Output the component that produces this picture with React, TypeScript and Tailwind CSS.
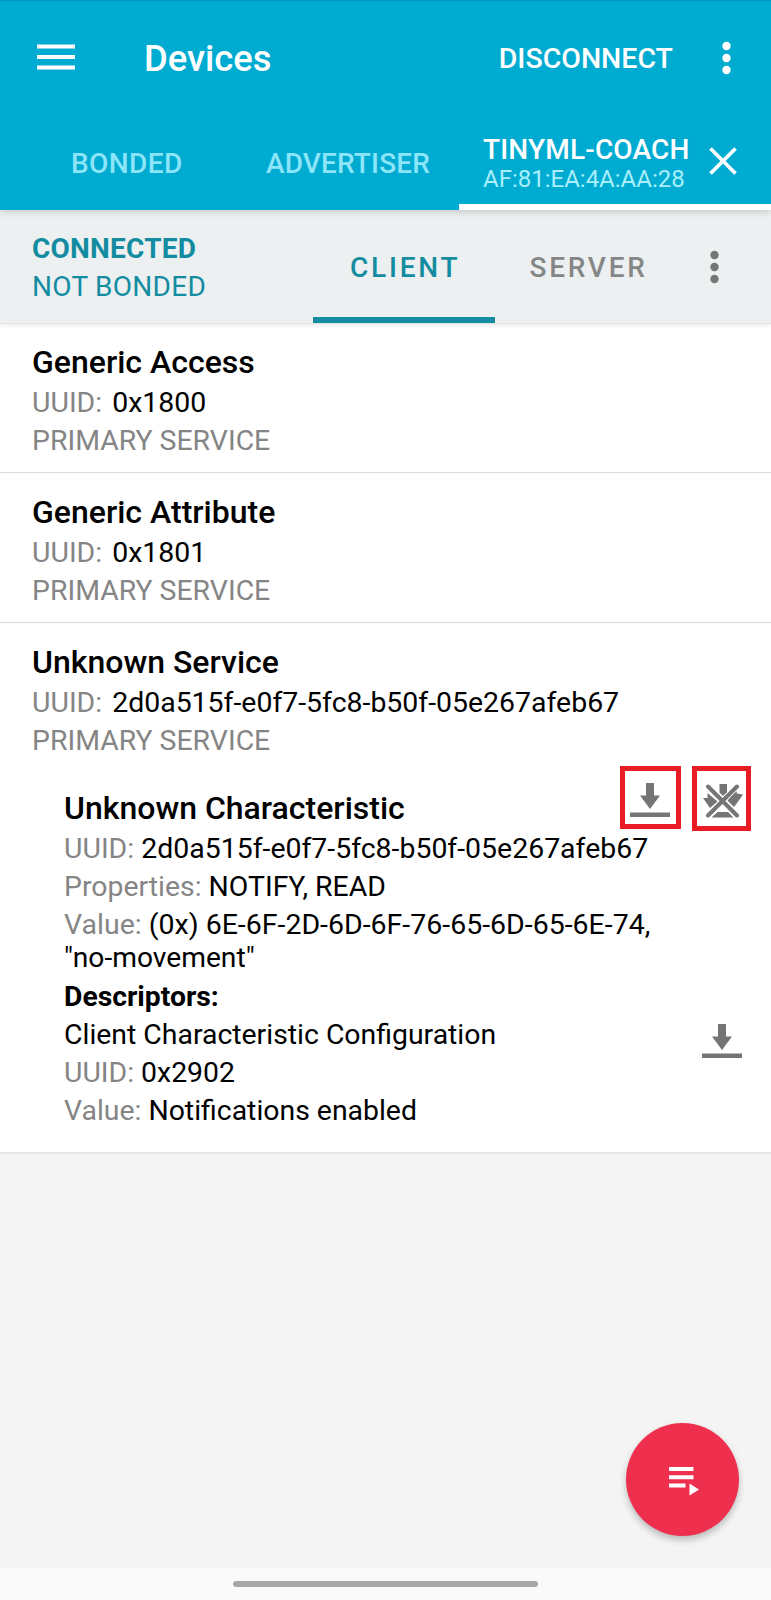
import React from "react";

function DownloadIcon() {
  return (
    <svg className="block h-[35px] w-10" viewBox="0 0 40 35" fill="#757575">
      <path d="M16 0h8v12.500h6L20 26 10 12.500h6z" />
      <path d="M0 29.500h40V34H0z" />
    </svg>
  );
}

function UnsubscribeIcon() {
  return (
    <svg className="block h-[34px] w-10" viewBox="0 0 40 34">
      <g fill="#757575">
        <path d="M16.500 0h7.500v8.500L20.200 12l-3.700-3.500z" />
        <path d="M0 14h4.500V9l10 8.500L7 24z" />
        <path d="M40 10.500l-6-1L33 6l-8.500 10.500L31 23l4.500-6z" />
        <path d="M8.500 33.500l6-5.500h10.500l5.500 5.500z" />
      </g>
      <path d="M5 2.500l29 29M34 2.500l-29 29" fill="none" stroke="#ffffff" strokeWidth="6" />
      <path d="M5 2.500l29 29M34 2.500l-29 29" fill="none" stroke="#757575" strokeWidth="4" strokeLinecap="round" />
    </svg>
  );
}

function MoreIcon() {
  return (
    <svg className="block h-[34px] w-[9px]" viewBox="0 0 9 34" fill="currentColor">
      <circle cx="4.500" cy="5" r="4.200" />
      <circle cx="4.500" cy="17" r="4.200" />
      <circle cx="4.500" cy="29" r="4.200" />
    </svg>
  );
}

function Label({ children }: { children: React.ReactNode }) {
  return <span className="text-[#858585]">{children}</span>;
}

function Service({ name, uuid }: { name: string; uuid: string }) {
  return (
    <>
      <h2 className="mb-0.5 text-[32px] leading-10 font-medium">{name}</h2>
      <div className="flex gap-2.5 text-[28.450px] leading-[38px]">
        <Label>UUID:</Label>
        <span>{uuid}</span>
      </div>
      <div className="text-[28.400px] leading-[38px]">
        <Label>PRIMARY SERVICE</Label>
      </div>
    </>
  );
}

export default function App() {
  return (
    <div className="flex h-[1600px] w-[771px] flex-col overflow-hidden bg-[#f4f4f4] font-['Roboto',sans-serif] whitespace-nowrap text-black">
      <header className="relative z-10 flex h-[210px] shrink-0 flex-col border-t border-[#0396ba] bg-[#00abd1] text-white shadow-[0_2px_7px_rgba(0,0,0,0.16)]">
        <div className="flex h-[116px] items-center pl-[37px]">
          <svg className="mb-[5px] h-[26px] w-[38px]" viewBox="0 0 38 26" fill="#ffffff">
            <path d="M0 .5h38v4H0zM0 11h38v4H0zM0 21.500h38v4H0z" />
          </svg>
          <h1 className="ml-[69px] text-[36.400px] leading-[42px] font-medium">Devices</h1>
          <span className="ml-auto text-[28.500px] leading-8 font-medium">DISCONNECT</span>
          <span className="mr-10 mb-[3px] ml-[49px]">
            <MoreIcon />
          </span>
        </div>
        <nav className="flex h-[93px] items-stretch text-[28px] font-medium">
          <span className="flex w-[257px] pt-[31px] pl-[71px] leading-8 tracking-[0.400px] text-[#8ce5f8]">BONDED</span>
          <span className="flex w-[202px] pt-[31px] pl-[9px] leading-8 tracking-[0.150px] text-[#8ce5f8]">ADVERTISER</span>
          <div className="flex w-[312px] border-b-[6px] border-white pl-6">
            <div className="w-[226px] pt-[17px]">
              <div className="leading-8 tracking-[0.170px]">TINYML-COACH</div>
              <div className="text-[24px] leading-[27px] font-normal text-[#a8effd]">AF:81:EA:4A:AA:28</div>
            </div>
            <svg className="mt-[30px] h-7 w-7" viewBox="0 0 28 28" fill="none" stroke="#ffffff" strokeWidth="3.800">
              <path d="M1.500 1.500l25 25M26.500 1.500l-25 25" />
            </svg>
          </div>
        </nav>
      </header>

      <section className="relative flex h-[114px] shrink-0 border-b border-[#e2e4e4] bg-[#ecf0f1] text-[28px] shadow-[0_1px_5px_rgba(0,0,0,0.1)]">
        <div className="w-[313px] pt-5 pl-8 leading-[38px] text-[#138ca1]">
          <div className="font-bold tracking-[0.220px]">CONNECTED</div>
          <div className="tracking-[0.280px]">NOT BONDED</div>
        </div>
        <div className="w-[182px] border-b-[6px] border-[#138ca1] pt-[42px] pl-[37px] leading-8 font-medium tracking-[2.770px] text-[#138ca1]">
          CLIENT
        </div>
        <div className="w-[182px] pt-[42px] pl-[34.500px] leading-8 font-medium tracking-[2.740px] text-[#858787]">SERVER</div>
        <span className="mt-10 ml-[33px] text-[#757777]">
          <MoreIcon />
        </span>
      </section>

      <main className="shrink-0">
        <article className="h-[149px] border-b border-[#dadada] bg-white pt-[18px] pl-8">
          <Service name="Generic Access" uuid="0x1800" />
        </article>
        <article className="h-[150px] border-b border-[#dadada] bg-white pt-[19px] pl-8">
          <Service name="Generic Attribute" uuid="0x1801" />
        </article>
        <article className="h-[531px] border-b-2 border-[#e4e4e4] bg-white pt-[19px] pl-8">
          <Service name="Unknown Service" uuid="2d0a515f-e0f7-5fc8-b50f-05e267afeb67" />
          <div className="mt-1.5 flex pl-8">
            <div className="w-[556px] pt-[22px] text-[28.400px] leading-[38px]">
              <h3 className="mb-0.5 text-[32px] leading-10 font-medium">Unknown Characteristic</h3>
              <div className="text-[28.450px]">
                <Label>UUID:</Label> 2d0a515f-e0f7-5fc8-b50f-05e267afeb67
              </div>
              <div>
                <Label>Properties:</Label> NOTIFY, READ
              </div>
              <div className="text-[28.500px]">
                <Label>Value:</Label> (0x) 6E-6F-2D-6D-6F-76-65-6D-65-6E-74,
              </div>
              <div className="mb-1.5 text-[28.200px] leading-7">"no-movement"</div>
              <div className="text-[28.300px] font-bold">Descriptors:</div>
              <div>Client Characteristic Configuration</div>
              <div>
                <Label>UUID:</Label> 0x2902
              </div>
              <div>
                <Label>Value:</Label> Notifications enabled
              </div>
            </div>
            <div className="flex flex-col">
              <div className="flex items-start gap-[11px]">
                <div className="h-[63px] w-[61px] border-[5px] border-[#e81c24] pt-3 pl-[5px]">
                  <DownloadIcon />
                </div>
                <div className="h-[65px] w-[59px] border-[5px] border-[#e81c24] pt-[13px] pl-[6px]">
                  <UnsubscribeIcon />
                </div>
              </div>
              <div className="mt-[193px] ml-[82px]">
                <DownloadIcon />
              </div>
            </div>
          </div>
        </article>
      </main>

      <div className="flex flex-1 items-end justify-end pr-8 pb-8">
        <div className="flex h-[113px] w-[113px] items-center justify-center rounded-full bg-[#ee304e] shadow-[0_4px_7px_rgba(0,0,0,0.24)]">
          <svg className="mt-0.5 ml-1 h-[30px] w-[31px]" viewBox="0 0 31 30" fill="#ffffff">
            <path d="M0 1h24.500v4H0zM0 9.300h24.500v4H0zM0 17.500h16.500v4H0z" />
            <path d="M20.500 17.500v12l9.500-6z" />
          </svg>
        </div>
      </div>

      <footer className="flex h-8 shrink-0 justify-center bg-[#fafafa] pt-[13px]">
        <div className="h-1.5 w-[305px] rounded-[3px] bg-[#a6a6a6]" />
      </footer>
    </div>
  );
}
